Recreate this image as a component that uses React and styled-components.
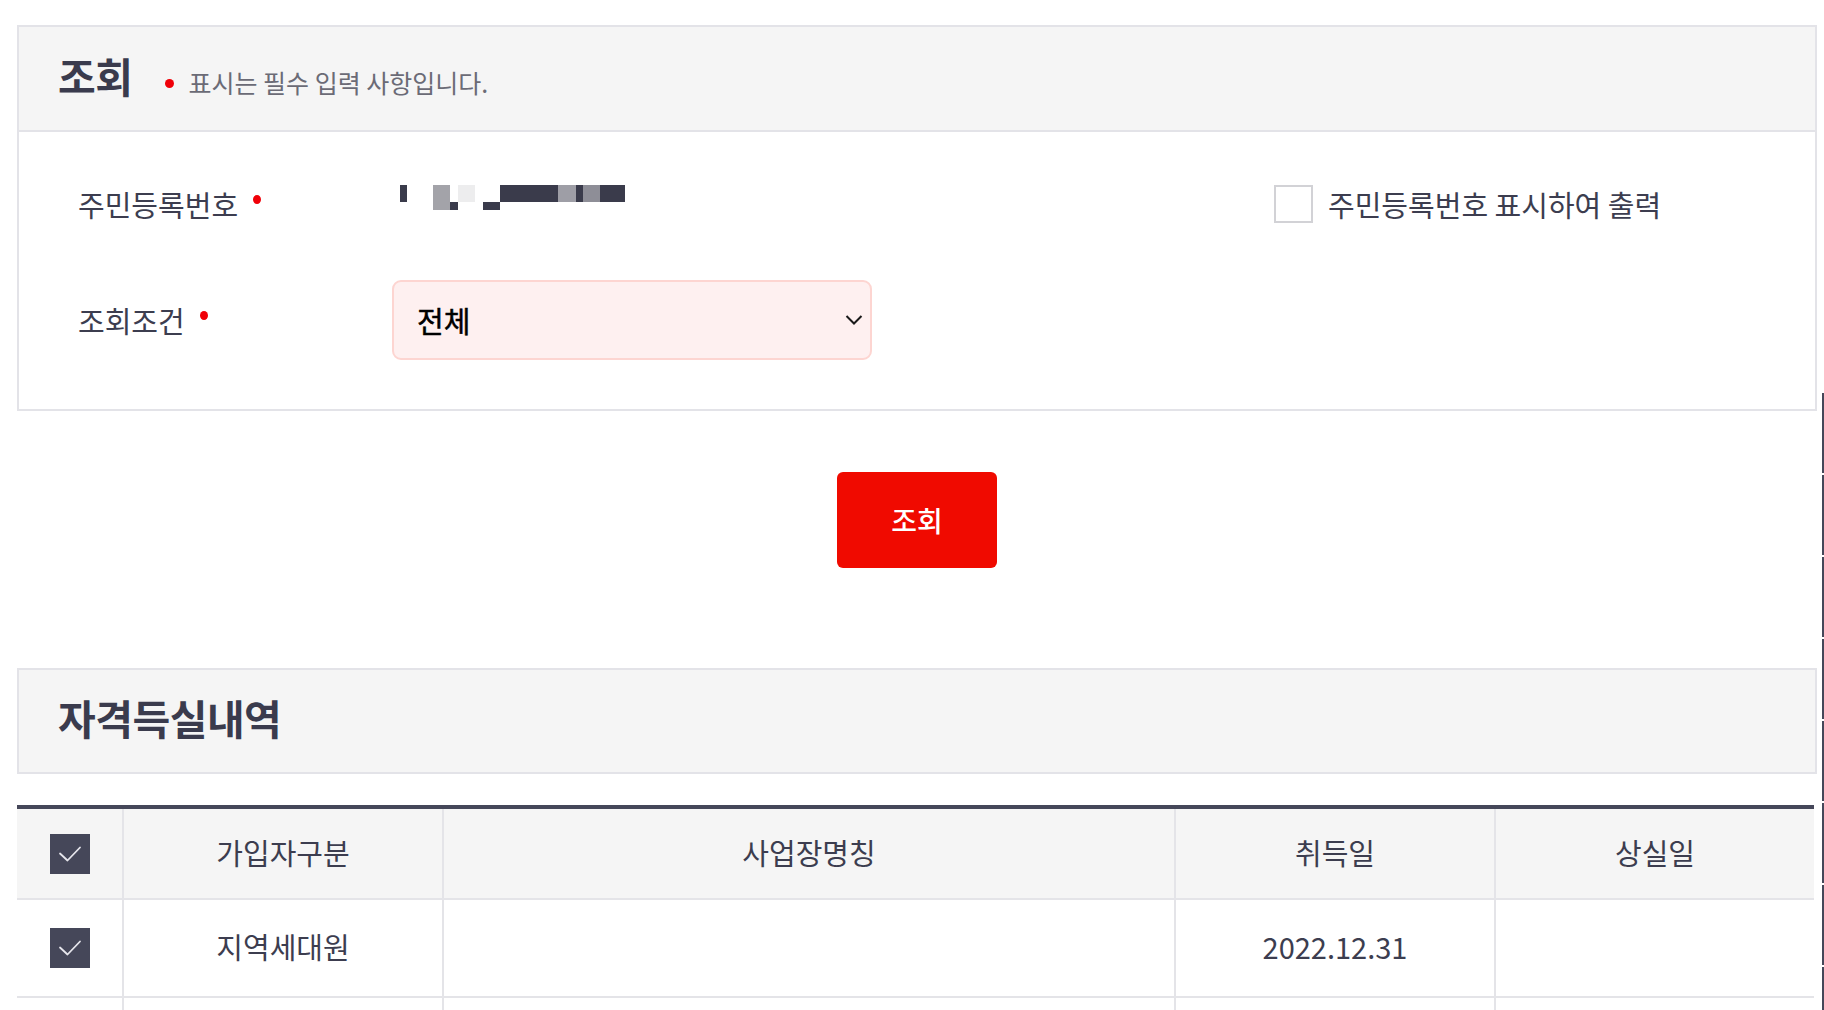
import React from "react";
import styled, { createGlobalStyle } from "styled-components";

const GlobalStyle = createGlobalStyle`
  html, body {
    margin: 0;
    padding: 0;
    background: #ffffff;
    overflow: hidden;
  }
  body {
    font-family: "Noto Sans CJK KR", "Noto Sans", "Liberation Sans", sans-serif;
    color: #3c3d4f;
  }
  * { box-sizing: border-box; }
`;

const Page = styled.main`
  width: 1800px;
  margin: 25px 0 0 17px;
  display: flex;
  flex-direction: column;
`;

const Panel = styled.section`
  border: 2px solid #e3e3e8;
  background: #ffffff;
`;

const PanelHeader = styled.header`
  height: ${(p) => (p.$standalone ? "102px" : "105px")};
  background: #f5f5f5;
  border-bottom: ${(p) => (p.$standalone ? "none" : "2px solid #e3e3e8")};
  display: flex;
  align-items: center;
  padding: 0 40px 6px 39px;
`;

const TitleGroup = styled.div`
  display: flex;
  align-items: baseline;
  gap: 33px;
`;

const Title = styled.h2`
  margin: 0;
  font-size: 41px;
  line-height: 1.2;
  font-weight: 700;
  color: #3a3b4d;
  letter-spacing: -0.5px;
`;

const Notice = styled.span`
  font-size: 25px;
  color: #6b6b76;
  &::before {
    content: "";
    display: inline-block;
    width: 9px;
    height: 9px;
    border-radius: 50%;
    background: #f00008;
    margin-right: 14px;
    vertical-align: 5px;
  }
`;

const PanelBody = styled.div`
  padding: 32px 40px 49px 59px;
  display: flex;
  flex-direction: column;
  gap: 36px;
`;

const FormRow = styled.div`
  display: grid;
  grid-template-columns: 314px 882px 1fr;
  align-items: center;
  height: 80px;
`;

const Label = styled.div`
  font-size: 29px;
  color: #3c3d4f;
  display: flex;
  align-items: center;
`;

const RequiredDot = styled.span`
  display: inline-block;
  width: 8px;
  height: 9px;
  border-radius: 50%;
  background: #f00008;
  margin-left: 15px;
  margin-bottom: 9px;
`;

const Masked = styled.svg`
  display: block;
  margin: 0 0 13px 8px;
`;

const CheckOption = styled.label`
  display: flex;
  align-items: center;
  gap: 15px;
  font-size: 29px;
  color: #3c3d4f;
  cursor: pointer;
`;

const EmptyBox = styled.span`
  width: 39px;
  height: 38px;
  border: 2px solid #d2d2d6;
  background: #ffffff;
  flex-shrink: 0;
`;

const SelectBox = styled.div`
  width: 480px;
  height: 80px;
  border: 2px solid #fdd5d1;
  border-radius: 9px;
  background: #fef0f0;
  display: flex;
  align-items: center;
  justify-content: space-between;
  padding: 0 7px 0 23px;
  font-size: 29px;
  font-weight: 400;
  color: #000000;
  -webkit-text-stroke: 0.5px #000000;
`;

const ButtonRow = styled.div`
  display: flex;
  justify-content: center;
  margin-top: 61px;
`;

const SearchButton = styled.button`
  width: 160px;
  height: 96px;
  border: none;
  border-radius: 6px;
  background: #f00a00;
  color: #ffffff;
  font-family: inherit;
  font-size: 28px;
  font-weight: 500;
  cursor: pointer;
`;

const SectionHeader = styled.div`
  margin-top: 100px;
  border: 2px solid #e3e3e8;
`;

const Table = styled.div`
  margin-top: 31px;
  border-top: 4px solid #454759;
  width: 1797px;
`;

const Row = styled.div`
  display: grid;
  grid-template-columns: 105px 320px 732px 320px 320px;
  height: ${(p) => (p.$head ? "91px" : "98px")};
  background: ${(p) => (p.$head ? "#f5f5f5" : "#ffffff")};
  border-bottom: 2px solid #e4e4e8;
`;

const Cell = styled.div`
  display: flex;
  align-items: center;
  justify-content: center;
  font-size: 29px;
  color: #3c3d4f;
  border-left: 2px solid #e4e4e8;
  padding-bottom: 4px;
  &:first-child {
    border-left: none;
    padding-bottom: 0;
  }
`;

const CheckedBox = styled.span`
  width: 40px;
  height: 40px;
  background: #454759;
  display: flex;
  align-items: center;
  justify-content: center;
`;

const QuickMenu = styled.aside`
  position: fixed;
  top: 393px;
  left: 1822px;
  width: 60px;
  display: flex;
  flex-direction: column;
  gap: 2px;
`;

const QuickItem = styled.div`
  height: 80px;
  background: #454759;
`;

function Check() {
  return (
    <CheckedBox>
      <svg width="40" height="40" viewBox="0 0 40 40">
        <polyline
          points="10,19.5 17.5,26.5 30,13.5"
          fill="none"
          stroke="#e6e6ec"
          strokeWidth="1.8"
          strokeLinecap="round"
          strokeLinejoin="round"
        />
      </svg>
    </CheckedBox>
  );
}

function Chevron() {
  return (
    <svg width="18" height="12" viewBox="0 0 18 12">
      <polyline
        points="1.5,2 9,9.5 16.5,2"
        fill="none"
        stroke="#1a1a1a"
        strokeWidth="2"
      />
    </svg>
  );
}

function MaskedNumber() {
  const dark = "#3a3b4b";
  const rects = [
    [0, 0, 7, 17, dark],
    [33, 0, 17, 25, "#a3a3a9"],
    [50, 17, 8, 8, dark],
    [58, 0, 17, 17, "#ededee"],
    [83, 17, 17, 8, dark],
    [100, 0, 58, 17, dark],
    [158, 0, 18, 17, "#9e9ea6"],
    [176, 0, 7, 17, dark],
    [183, 0, 17, 17, "#8e8e97"],
    [200, 0, 25, 17, dark],
  ];
  return (
    <Masked width="226" height="26" viewBox="0 0 226 26">
      {rects.map(([x, y, w, h, c], i) => (
        <rect key={i} x={x} y={y} width={w} height={h} fill={c} />
      ))}
    </Masked>
  );
}

export default function App() {
  return (
    <>
      <GlobalStyle />
      <Page>
        <Panel>
          <PanelHeader>
            <TitleGroup>
              <Title>조회</Title>
              <Notice>표시는 필수 입력 사항입니다.</Notice>
            </TitleGroup>
          </PanelHeader>
          <PanelBody>
            <FormRow>
              <Label>
                주민등록번호
                <RequiredDot />
              </Label>
              <MaskedNumber />
              <CheckOption>
                <EmptyBox />
                주민등록번호 표시하여 출력
              </CheckOption>
            </FormRow>
            <FormRow>
              <Label>
                조회조건
                <RequiredDot />
              </Label>
              <SelectBox>
                <span>전체</span>
                <Chevron />
              </SelectBox>
            </FormRow>
          </PanelBody>
        </Panel>

        <ButtonRow>
          <SearchButton type="button">조회</SearchButton>
        </ButtonRow>

        <SectionHeader>
          <PanelHeader $standalone>
            <Title>자격득실내역</Title>
          </PanelHeader>
        </SectionHeader>

        <Table>
          <Row $head>
            <Cell>
              <Check />
            </Cell>
            <Cell>가입자구분</Cell>
            <Cell>사업장명칭</Cell>
            <Cell>취득일</Cell>
            <Cell>상실일</Cell>
          </Row>
          <Row>
            <Cell>
              <Check />
            </Cell>
            <Cell>지역세대원</Cell>
            <Cell></Cell>
            <Cell>2022.12.31</Cell>
            <Cell></Cell>
          </Row>
          <Row>
            <Cell>
              <Check />
            </Cell>
            <Cell></Cell>
            <Cell></Cell>
            <Cell></Cell>
            <Cell></Cell>
          </Row>
        </Table>
      </Page>
      <QuickMenu>
        {Array.from({ length: 8 }).map((_, i) => (
          <QuickItem key={i} />
        ))}
      </QuickMenu>
    </>
  );
}
